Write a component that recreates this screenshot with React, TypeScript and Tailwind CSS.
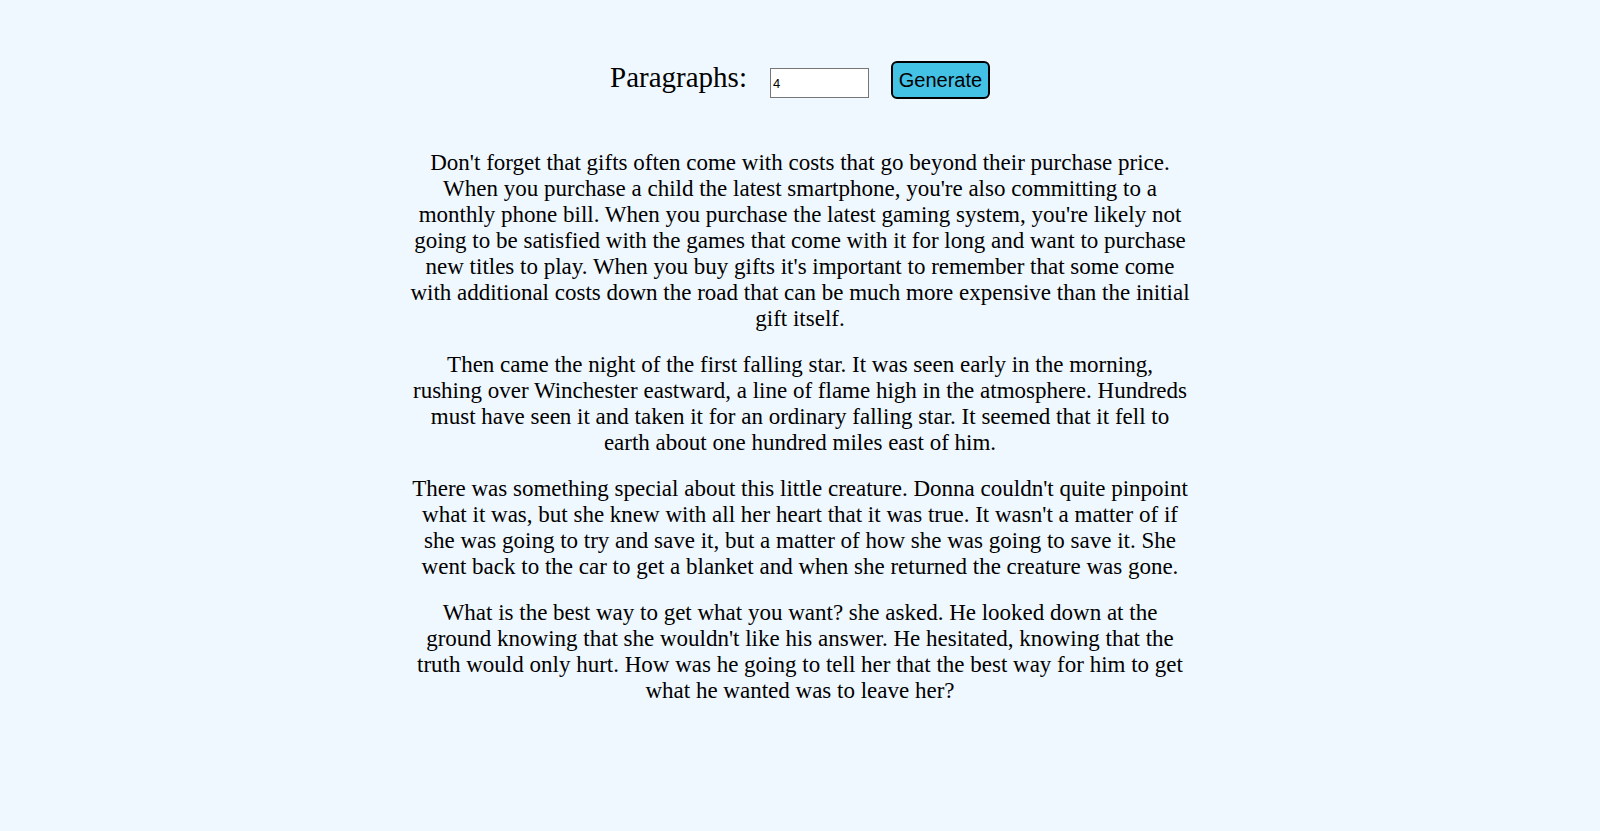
import { useState } from "react";

const paragraphs = [
  "Don't forget that gifts often come with costs that go beyond their purchase price. When you purchase a child the latest smartphone, you're also committing to a monthly phone bill. When you purchase the latest gaming system, you're likely not going to be satisfied with the games that come with it for long and want to purchase new titles to play. When you buy gifts it's important to remember that some come with additional costs down the road that can be much more expensive than the initial gift itself.",
  "Then came the night of the first falling star. It was seen early in the morning, rushing over Winchester eastward, a line of flame high in the atmosphere. Hundreds must have seen it and taken it for an ordinary falling star. It seemed that it fell to earth about one hundred miles east of him.",
  "There was something special about this little creature. Donna couldn't quite pinpoint what it was, but she knew with all her heart that it was true. It wasn't a matter of if she was going to try and save it, but a matter of how she was going to save it. She went back to the car to get a blanket and when she returned the creature was gone.",
  "What is the best way to get what you want? she asked. He looked down at the ground knowing that she wouldn't like his answer. He hesitated, knowing that the truth would only hurt. How was he going to tell her that the best way for him to get what he wanted was to leave her?",
];

export default function App() {
  const [count, setCount] = useState("4");

  return (
    <main className="min-h-screen bg-[#f0f8ff] pt-[61px] font-['Liberation_Serif',serif] text-black">
      {/* controls */}
      <div className="flex items-center justify-center">
        <label className="mb-[6px] text-[29px] leading-none">Paragraphs:</label>
        <input
          type="number"
          value={count}
          onChange={(e) => setCount(e.target.value)}
          className="ml-[23px] mt-[6px] h-[30px] w-[99px] border border-[#767676] bg-white px-[2px] font-['Liberation_Sans',sans-serif] text-[13px] outline-none [appearance:textfield]"
        />
        <button className="ml-[22px] h-[38px] w-[99px] rounded-[6px] border-2 border-black bg-[#44c2e6] font-['Liberation_Sans',sans-serif] text-[20px] leading-none">
          Generate
        </button>
      </div>

      {/* output */}
      <div className="mx-auto mt-[51px] w-[780px] text-center text-[23px] leading-[26px]">
        {paragraphs.slice(0, Number(count) || 0).map((p, i) => (
          <p key={i} className="mb-[20px]">
            {p}
          </p>
        ))}
      </div>
    </main>
  );
}
